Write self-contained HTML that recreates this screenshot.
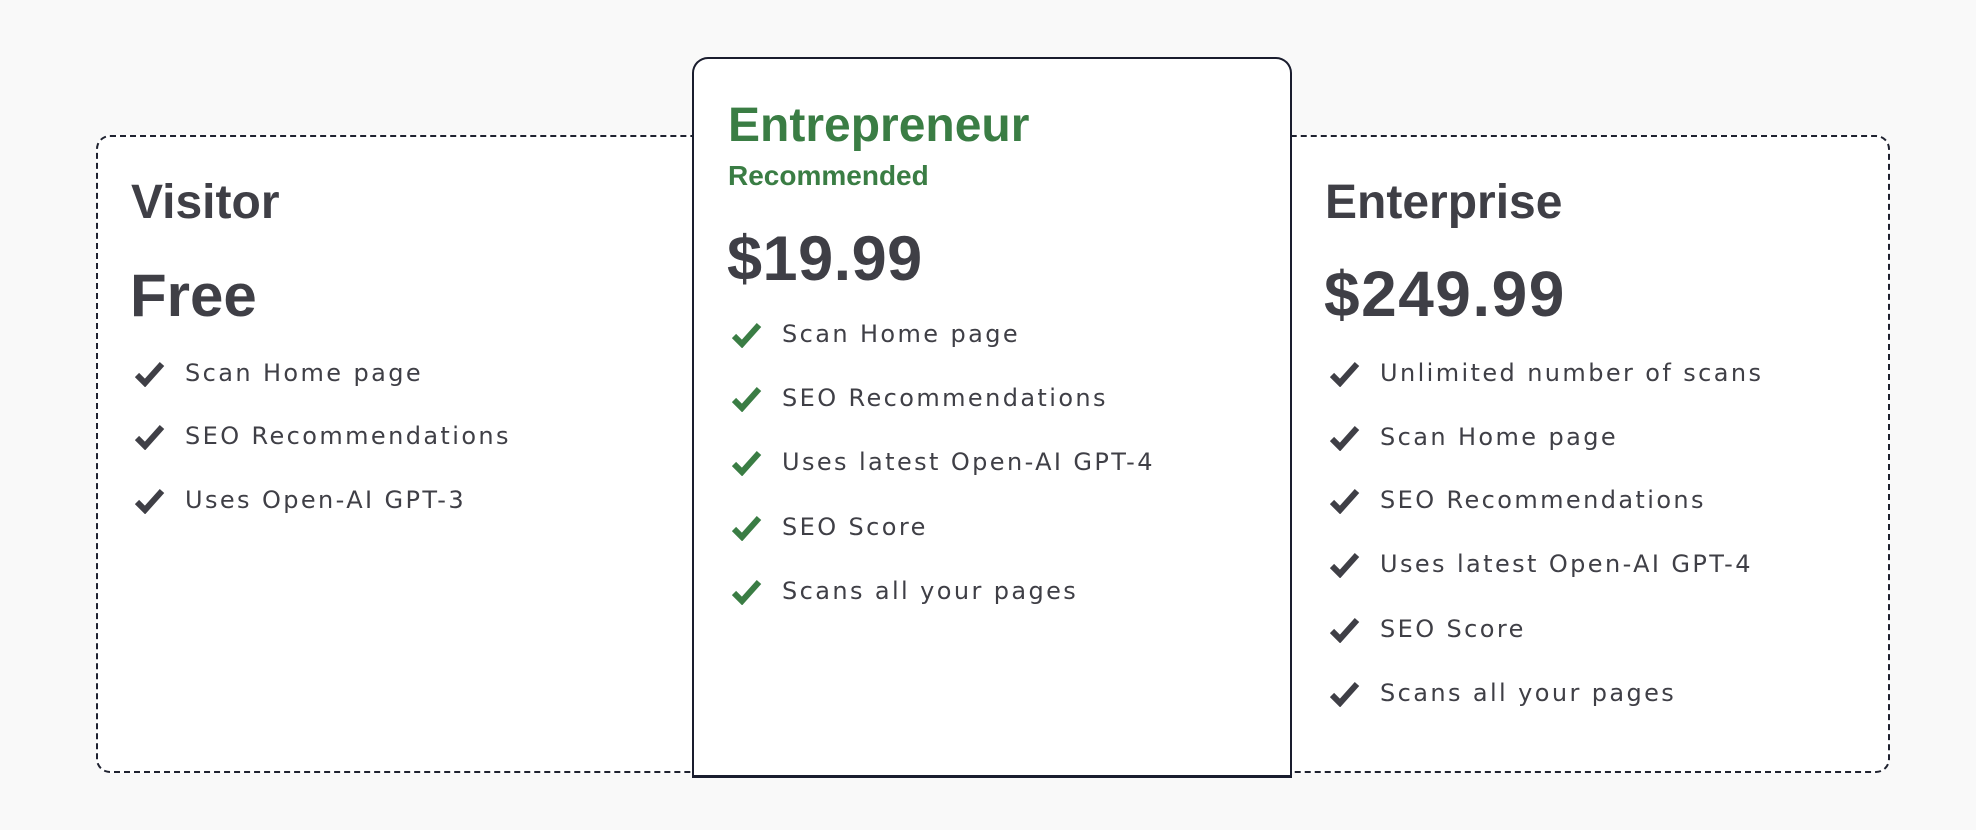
<!DOCTYPE html>
<html><head><meta charset="utf-8"><style>
html,body{margin:0;padding:0;}
body{width:1976px;height:830px;background:#f9f9f9;position:relative;overflow:hidden;font-family:"Liberation Sans",sans-serif;color:#3f3f46;}
.dash{position:absolute;left:96px;top:135px;width:1790px;height:634px;border:2px dashed #1f2230;border-radius:14px;background:#fff;}
.card{position:absolute;left:692px;top:57px;width:596px;height:716px;border:2px solid #1a1d2e;border-bottom-width:3px;border-radius:16px 16px 0 0;background:#fff;}
.t{position:absolute;line-height:1;font-weight:bold;white-space:nowrap;}
.g{color:#3a7d44;}
.li{position:absolute;height:30px;display:flex;align-items:center;font-family:"DejaVu Sans",sans-serif;font-size:24px;letter-spacing:2.4px;white-space:nowrap;}
.li svg{position:absolute;top:3px;}
</style></head><body>
<div class="dash"></div>
<div class="card"></div>

<div class="t" style="left:131px;top:179px;font-size:48px;">Visitor</div>
<div class="t" style="left:130px;top:266px;font-size:60px;">Free</div>

<div class="t g" style="left:728px;top:102px;font-size:48px;">Entrepreneur</div>
<div class="t g" style="left:728px;top:162px;font-size:28px;">Recommended</div>
<div class="t" style="left:727px;top:228px;font-size:63px;letter-spacing:0.5px;">$19.99</div>

<div class="t" style="left:1324px;top:262px;font-size:64px;letter-spacing:1.5px;">$249.99</div>
<div class="t" style="left:1325px;top:179px;font-size:48px;">Enterprise</div>

<svg width="0" height="0" style="position:absolute"><defs>
<symbol id="ck" viewBox="0 0 30 26"><path d="M2 14 L10 22 L27 3" fill="none" stroke="currentColor" stroke-width="6" stroke-linejoin="miter"/></symbol></defs></svg>

<!-- Visitor -->
<div class="li" style="left:185px;top:358px;"><svg style="left:-50px;color:#3f3f46" width="30" height="26"><use href="#ck"/></svg>Scan Home page</div>
<div class="li" style="left:185px;top:421px;"><svg style="left:-50px;color:#3f3f46" width="30" height="26"><use href="#ck"/></svg>SEO Recommendations</div>
<div class="li" style="left:185px;top:485px;"><svg style="left:-50px;color:#3f3f46" width="30" height="26"><use href="#ck"/></svg>Uses Open-AI GPT-3</div>

<!-- Entrepreneur -->
<div class="li" style="left:782px;top:319px;"><svg style="left:-50px;color:#3a7d44" width="30" height="26"><use href="#ck"/></svg>Scan Home page</div>
<div class="li" style="left:782px;top:383px;"><svg style="left:-50px;color:#3a7d44" width="30" height="26"><use href="#ck"/></svg>SEO Recommendations</div>
<div class="li" style="left:782px;top:447px;"><svg style="left:-50px;color:#3a7d44" width="30" height="26"><use href="#ck"/></svg>Uses latest Open-AI GPT-4</div>
<div class="li" style="left:782px;top:512px;"><svg style="left:-50px;color:#3a7d44" width="30" height="26"><use href="#ck"/></svg>SEO Score</div>
<div class="li" style="left:782px;top:576px;"><svg style="left:-50px;color:#3a7d44" width="30" height="26"><use href="#ck"/></svg>Scans all your pages</div>

<!-- Enterprise -->
<div class="li" style="left:1380px;top:358px;"><svg style="left:-50px;color:#3f3f46" width="30" height="26"><use href="#ck"/></svg>Unlimited number of scans</div>
<div class="li" style="left:1380px;top:422px;"><svg style="left:-50px;color:#3f3f46" width="30" height="26"><use href="#ck"/></svg>Scan Home page</div>
<div class="li" style="left:1380px;top:485px;"><svg style="left:-50px;color:#3f3f46" width="30" height="26"><use href="#ck"/></svg>SEO Recommendations</div>
<div class="li" style="left:1380px;top:549px;"><svg style="left:-50px;color:#3f3f46" width="30" height="26"><use href="#ck"/></svg>Uses latest Open-AI GPT-4</div>
<div class="li" style="left:1380px;top:614px;"><svg style="left:-50px;color:#3f3f46" width="30" height="26"><use href="#ck"/></svg>SEO Score</div>
<div class="li" style="left:1380px;top:678px;"><svg style="left:-50px;color:#3f3f46" width="30" height="26"><use href="#ck"/></svg>Scans all your pages</div>
</body></html>
